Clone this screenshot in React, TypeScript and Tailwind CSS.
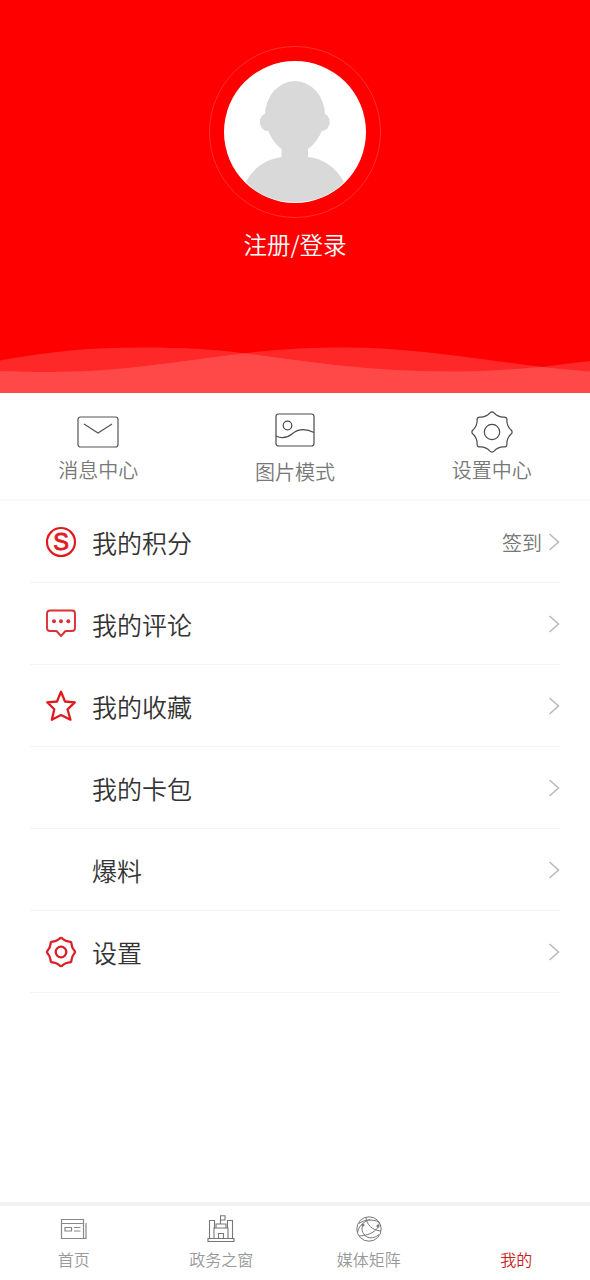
import React from 'react';

// Eight-pointed cog outline, rounded tips with shallow hollows in between
const cogPath = (c: number, tip: number, hollow: number) => {
  const at = (deg: number, r: number) => {
    const a = (deg * Math.PI) / 180;
    return `${(c + r * Math.cos(a)).toFixed(2)} ${(c + r * Math.sin(a)).toFixed(2)}`;
  };
  let d = `M${at(-7, tip * 0.94)}`;
  for (let deg = 0; deg < 360; deg += 45) {
    d += `Q${at(deg, tip * 1.06)} ${at(deg + 7, tip * 0.94)}`;
    d += `C${at(deg + 14, hollow)} ${at(deg + 31, hollow)} ${at(deg + 38, tip * 0.94)}`;
  }
  return d + 'Z';
};

const Avatar = () => (
  <div className="flex h-[172px] w-[172px] items-center justify-center rounded-full border border-[#ff3030]">
    <svg width="142" height="142" viewBox="0 0 142 142" className="overflow-hidden rounded-full bg-white">
      <g fill="#d9d9d9">
        <ellipse cx="71" cy="54.500" rx="30" ry="34.500" />
        <ellipse cx="43.500" cy="61" rx="7.700" ry="9" />
        <ellipse cx="98" cy="61" rx="7.700" ry="9" />
        <path d="M44 68C47 77 51 83 57.500 88V96C42 98 29 107 22 121C34 134 51 141 71 141C91 141 108 134 120 121C112 106 98 97 84 96V88C91 83 95 77 98 68Z" />
      </g>
    </svg>
  </div>
);

const Waves = () => (
  <svg width="590" height="48" viewBox="0 0 590 48" className="block">
    <g fill="#ffffff" fillOpacity="0.158">
      <path d="M0 15.500C45 7 90 2.500 140 2.500C185 2.500 218 4.500 250 9C310 17 370 26.500 450 26.500C490 26.500 525 23.500 550 21C565 19 580 17 590 16V48H0Z" />
      <path d="M0 26C15 26.500 30 27 50 27C120 27 180 16 235 9.500C270 4.500 310 2.500 345 2.500C400 2.500 450 10 500 16.500C530 20.500 560 24.500 590 26.500V48H0Z" />
    </g>
  </svg>
);

const MailIcon = () => (
  <svg width="42" height="32" viewBox="0 0 42 32" fill="none" stroke="#555" strokeWidth="1.2">
    <rect x="1" y="1" width="40" height="30" rx="2.500" />
    <path d="M7 8L21 17L35 8" />
  </svg>
);

const PictureIcon = () => (
  <svg width="40" height="34" viewBox="0 0 40 34" fill="none" stroke="#4a4a4a" strokeWidth="1.2">
    <rect x="1" y="1" width="38" height="32" rx="2.500" />
    <circle cx="12.500" cy="12.500" r="4.300" />
    <path d="M1 23C6 25.500 12 25 17 21C23 16 31 15.500 39 19.500" />
  </svg>
);

const CogIcon = () => (
  <svg width="42" height="42" viewBox="0 0 42 42" fill="none" stroke="#4a4a4a" strokeWidth="1.2">
    <path d={cogPath(21, 20.2, 17)} />
    <circle cx="21" cy="21" r="7.700" />
  </svg>
);

const PointsIcon = () => (
  <svg width="32" height="32" viewBox="0 0 32 32">
    <circle cx="16" cy="16" r="14" fill="none" stroke="#e21a1f" strokeWidth="2.200" />
    <text x="16" y="24.300" textAnchor="middle" fill="#e21a1f" stroke="#e21a1f" strokeWidth="0.900" fontSize="23.500" className="font-['Liberation_Sans',sans-serif] font-normal">S</text>
  </svg>
);

const CommentIcon = () => (
  <svg width="32" height="32" viewBox="0 0 32 32" fill="none" stroke="#dc3035" strokeWidth="1.900" strokeLinejoin="round">
    <path d="M5 2.500H27Q30 2.500 30 5.500V20Q30 23 27 23H20.500L16 28L11.500 23H5Q2 23 2 20V5.500Q2 2.500 5 2.500Z" />
    <g fill="#dc3035" stroke="none">
      <circle cx="9" cy="13.200" r="2" />
      <circle cx="16" cy="13.200" r="2" />
      <circle cx="23.300" cy="13.200" r="2" />
    </g>
  </svg>
);

const StarIcon = () => (
  <svg width="32" height="32" viewBox="0 0 32 32" fill="none" stroke="#e21a1f" strokeWidth="2.300" strokeLinejoin="round">
    <path d="M16 1.800L20 11.500L29.800 12.300L22.500 19.300L25.500 29.700L16 25L6.800 29.700L9.300 19.300L2.200 12.300L12 11.500Z" />
  </svg>
);

const SettingsIcon = () => (
  <svg width="32" height="32" viewBox="0 0 32 32" fill="none" stroke="#dc1f28" strokeWidth="2.300">
    <path d={cogPath(16, 14.1, 12.4)} />
    <circle cx="16" cy="16" r="5.300" />
  </svg>
);

const Chevron = () => (
  <svg width="12" height="18" viewBox="0 0 12 18" fill="none" stroke="#b8b8b8" strokeWidth="1.500">
    <path d="M1.500 1L10.500 9L1.500 17" />
  </svg>
);

const NewsIcon = () => (
  <svg width="28" height="28" viewBox="0 0 28 28" fill="none" stroke="#888" strokeWidth="1.200">
    <path d="M1.500 4.500H23.500V23.500H1.500ZM1.500 8.500H23.500M23.500 23.500H26V8" />
    <path d="M5 12.500H11.500V16H5ZM14 12.500H20.500M14 16H20.500" />
  </svg>
);

const HallIcon = () => (
  <svg width="28" height="28" viewBox="0 0 28 28" fill="none" stroke="#777" strokeWidth="1.100">
    <path d="M1 23.500H27V26.500H1ZM2.500 23.500V5.500H7.500V13M25.500 23.500V5.500H20.500V13" />
    <path d="M7 23.500V13H21V23.500M9 13V9H19V13M13.500 9V0.800H18V5H13.500M11.500 23.500V18.500H16.500V23.500" />
  </svg>
);

const GlobeIcon = () => (
  <svg width="28" height="28" viewBox="0 0 28 28" fill="none" stroke="#777" strokeWidth="1">
    <circle cx="14" cy="14" r="12.200" />
    <path d="M11 2.500C11.500 9 17 15.500 26 16" />
    <path d="M4 8.500C9 4.500 18 4 24 7" />
    <path d="M24 7C25.500 13 17 20.500 4 21" />
    <path d="M15 4.500C8 6.500 3 12.500 2.500 18" />
    <path d="M8 10C5.500 15 8 20 13 22.500C17 23.500 21.500 22 24 19.500" />
    <circle cx="8" cy="10" r="1.100" fill="#777" />
    <circle cx="23" cy="11" r="1.100" fill="#777" />
  </svg>
);

const quickLinks = [
  { label: '消息中心', icon: MailIcon, pad: 'pt-[23px]', gap: 'mt-[7px]' },
  { label: '图片模式', icon: PictureIcon, pad: 'pt-[20px]', gap: 'mt-[10px]' },
  { label: '设置中心', icon: CogIcon, pad: 'pt-[18px]', gap: 'mt-[2px]' },
];

const menuRows = [
  { label: '我的积分', icon: PointsIcon, extra: '签到' },
  { label: '我的评论', icon: CommentIcon },
  { label: '我的收藏', icon: StarIcon },
  { label: '我的卡包' },
  { label: '爆料' },
  { label: '设置', icon: SettingsIcon },
];

const tabs = [
  { label: '首页', icon: NewsIcon },
  { label: '政务之窗', icon: HallIcon },
  { label: '媒体矩阵', icon: GlobeIcon },
  { label: '我的', active: true },
];

const App: React.FC = () => {
  return (
    <div className="flex h-[1280px] w-[590px] flex-col overflow-hidden bg-white font-['Noto_Sans_CJK_SC',sans-serif] font-[350]">
      {/* Profile header */}
      <header className="flex h-[393px] shrink-0 flex-col items-center bg-[#ff0000] pt-[46px]">
        <Avatar />
        <button className="mt-[9px] text-[23.500px] leading-[34px] text-white">注册/登录</button>
        <div className="mt-auto">
          <Waves />
        </div>
      </header>

      {/* Quick links */}
      <section className="grid h-[108px] shrink-0 grid-cols-3 border-b-2 border-[#f8f8f8]">
        {quickLinks.map(({ label, icon: Icon, pad, gap }) => (
          <div key={label} className={`flex flex-col items-center ${pad}`}>
            <Icon />
            <span className={`${gap} text-[20px] leading-[30px] text-[#777]`}>{label}</span>
          </div>
        ))}
      </section>

      {/* Menu */}
      <ul className="pr-[30px] pl-[30px]">
        {menuRows.map(({ label, icon: Icon, extra }) => (
          <li key={label} className="flex h-[82px] items-center border-b border-[#f4f4f4] pl-[15px]">
            <span className="h-8 w-8">{Icon && <Icon />}</span>
            <span className="ml-[15px] flex-1 text-[25px] leading-[36px] text-[#333]">{label}</span>
            {extra && <span className="mr-[6px] pt-[2px] text-[20px] leading-[30px] text-[#777]">{extra}</span>}
            <Chevron />
          </li>
        ))}
      </ul>

      {/* Tab bar */}
      <nav className="mt-auto grid h-[78px] shrink-0 grid-cols-4 border-t-4 border-[#f2f2f2]">
        {tabs.map(({ label, icon: Icon, active }) => (
          <div key={label} className="flex flex-col items-center pt-[9px]">
            <span className="h-7 w-7">{Icon && <Icon />}</span>
            <span className={`mt-[4px] text-[16px] leading-[24px] ${active ? 'text-[#c81e1e]' : 'text-[#999]'}`}>{label}</span>
          </div>
        ))}
      </nav>
    </div>
  );
};

export default App;
